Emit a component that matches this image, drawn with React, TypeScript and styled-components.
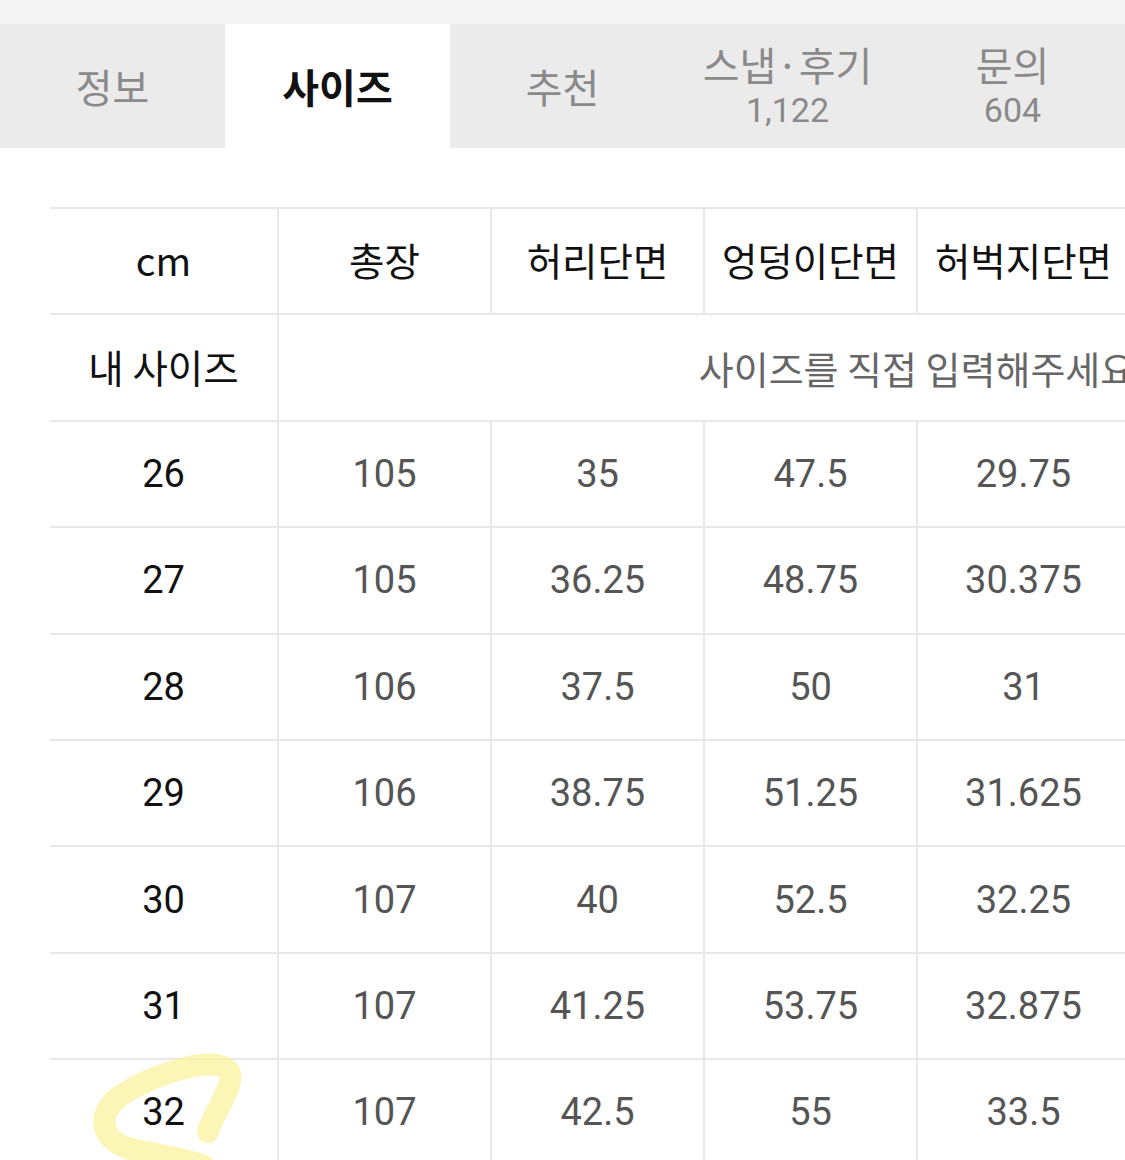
import styled, { createGlobalStyle } from 'styled-components';

const GlobalStyle = createGlobalStyle`
  html, body {
    margin: 0;
    padding: 0;
    background: #fff;
    overflow: hidden;
  }
  body {
    font-family: 'Noto Sans CJK KR', 'Noto Sans', sans-serif;
  }
`;

const Page = styled.div`
  position: relative;
  width: 1125px;
  height: 1160px;
  overflow: hidden;
  background: #fff;
`;

const TopStrip = styled.div`
  height: 24px;
  background: #f4f4f4;
`;

const Tabs = styled.nav`
  display: grid;
  grid-template-columns: repeat(5, 225px);
  height: 124px;
  background: #ebebeb;
`;

const Tab = styled.div<{ $active?: boolean }>`
  display: flex;
  flex-direction: column;
  align-items: center;
  justify-content: center;
  background: ${(p) => (p.$active ? '#fff' : 'transparent')};
  color: ${(p) => (p.$active ? '#111' : '#8a8a8a')};
  font-size: 40px;
  font-weight: ${(p) => (p.$active ? 700 : 400)};
  line-height: 1.1;
`;

const TabCount = styled.span`
  margin-top: 4px;
  font-family: Roboto, 'Noto Sans CJK KR', sans-serif;
  font-size: 34px;
  line-height: 1.2;
  color: #8a8a8a;
`;

const TableWrap = styled.div`
  margin-top: 59px;
  padding-left: 50px;
`;

const Table = styled.div`
  display: grid;
  grid-template-columns: 227px repeat(6, 213px);
  grid-auto-rows: 106.4px;
  width: max-content;
`;

const Cell = styled.div<{ $first?: boolean; $head?: boolean; $span?: number }>`
  display: flex;
  align-items: center;
  justify-content: center;
  box-sizing: border-box;
  border-top: 2px solid #e8e8e8;
  border-left: ${(p) => (p.$first ? 'none' : '2px solid #e8e8e8')};
  grid-column: ${(p) => (p.$span ? `span ${p.$span}` : 'auto')};
  font-family: ${(p) =>
    p.$head ? "'Noto Sans CJK KR', sans-serif" : "Roboto, 'Noto Sans CJK KR', sans-serif"};
  font-size: ${(p) => (p.$head ? '38.5px' : '38px')};
  font-weight: 400;
  color: ${(p) => (p.$first || p.$head ? '#111' : '#555')};
  padding-bottom: ${(p) => (p.$head ? '4px' : '0')};
`;

const Hint = styled.span`
  font-family: 'Noto Sans CJK KR', sans-serif;
  font-size: 38px;
  font-weight: 400;
  color: #666;
`;

const Scribble = styled.svg`
  position: absolute;
  left: 0;
  top: 0;
  pointer-events: none;
`;

const heads = ['총장', '허리단면', '엉덩이단면', '허벅지단면', '', ''];

const rows: [string, string, string, string, string][] = [
  ['26', '105', '35', '47.5', '29.75'],
  ['27', '105', '36.25', '48.75', '30.375'],
  ['28', '106', '37.5', '50', '31'],
  ['29', '106', '38.75', '51.25', '31.625'],
  ['30', '107', '40', '52.5', '32.25'],
  ['31', '107', '41.25', '53.75', '32.875'],
  ['32', '107', '42.5', '55', '33.5'],
];

function App() {
  return (
    <Page>
      <GlobalStyle />
      <TopStrip />
      <Tabs>
        <Tab>정보</Tab>
        <Tab $active>사이즈</Tab>
        <Tab>추천</Tab>
        <Tab>
          스냅·후기
          <TabCount>1,122</TabCount>
        </Tab>
        <Tab>
          문의
          <TabCount>604</TabCount>
        </Tab>
      </Tabs>
      <TableWrap>
        <Table>
          <Cell $first $head>
            cm
          </Cell>
          {heads.map((h, i) => (
            <Cell key={i} $head>
              {h}
            </Cell>
          ))}
          <Cell $first $head>
            내 사이즈
          </Cell>
          <Cell $span={6}>
            <Hint>사이즈를 직접 입력해주세요</Hint>
          </Cell>
          {rows.map((r) => (
            <>
              <Cell key={r[0]} $first>
                {r[0]}
              </Cell>
              {r.slice(1).map((v, i) => (
                <Cell key={r[0] + i}>{v}</Cell>
              ))}
              <Cell />
              <Cell />
            </>
          ))}
        </Table>
      </TableWrap>
      <Scribble width="1125" height="1160" viewBox="0 0 1125 1160">
        <path
          d="M208 1132 C 215 1108, 238 1082, 228 1070 C 212 1054, 150 1076, 120 1096 C 98 1112, 98 1138, 128 1148 C 158 1156, 186 1158, 204 1166"
          fill="none"
          stroke="#faf39c"
          strokeOpacity="0.75"
          strokeWidth="22"
          strokeLinecap="round"
        />
      </Scribble>
    </Page>
  );
}

export default App;
